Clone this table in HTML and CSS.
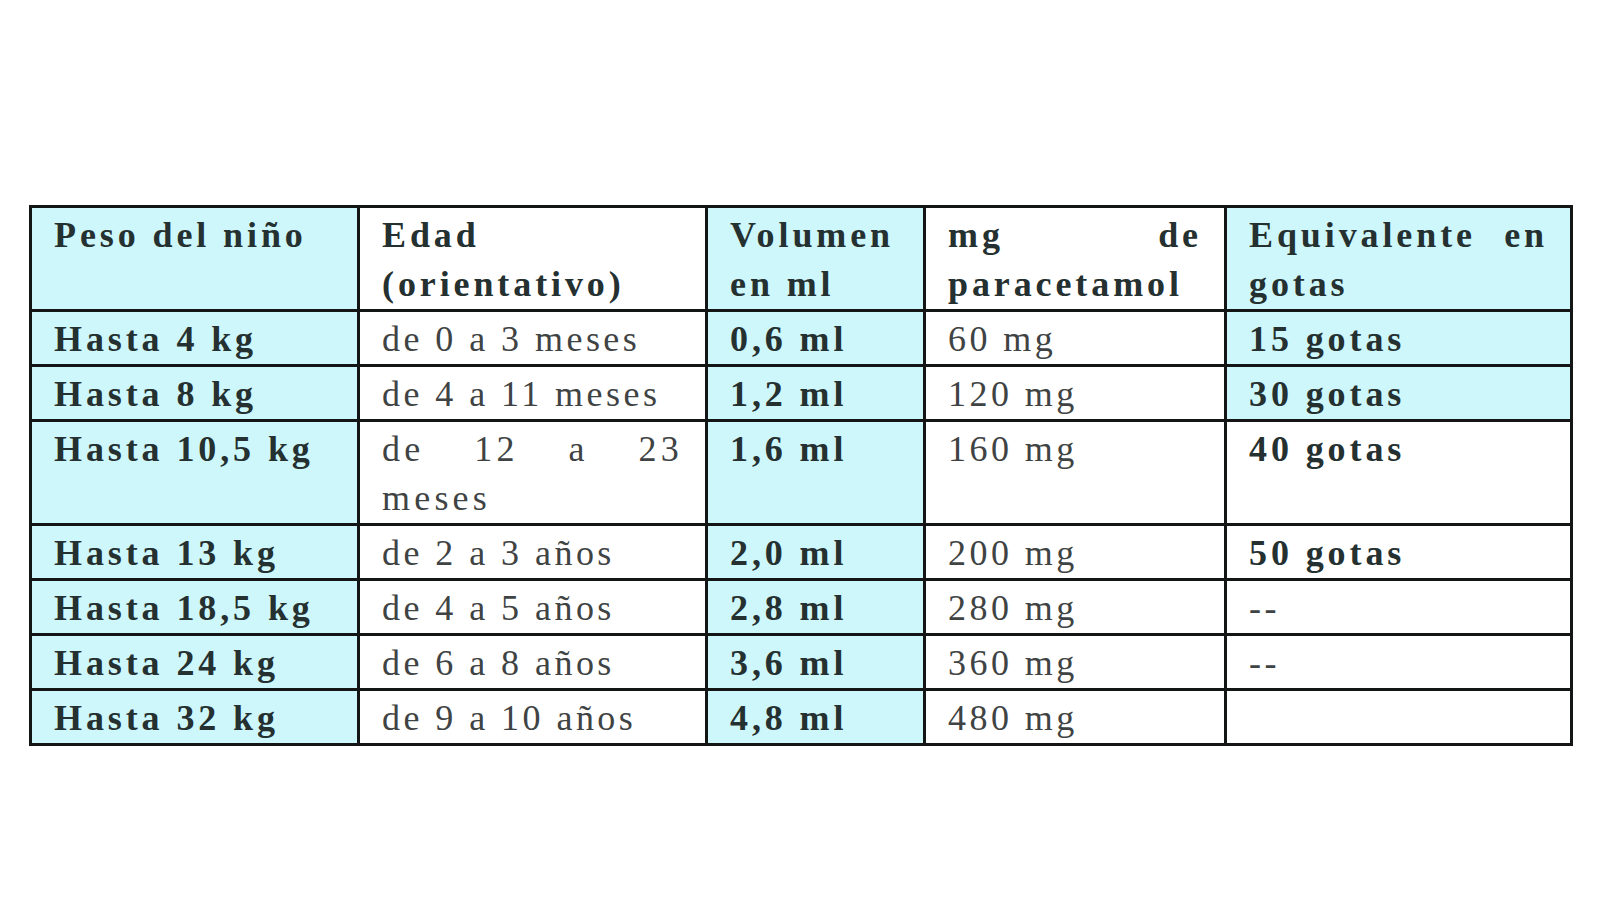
FILE: index.html
```html
<!DOCTYPE html>
<html lang="es">
<head>
<meta charset="utf-8">
<title>Dosis de paracetamol</title>
<link rel="stylesheet" href="styles.css">
</head>
<body>
<main class="page">
  <table class="dose-table">
    <colgroup>
      <col class="c1"><col class="c2"><col class="c3"><col class="c4"><col class="c5">
    </colgroup>
    <thead>
      <tr>
        <th class="cyan">Peso del niño</th>
        <th>Edad (orientativo)</th>
        <th class="cyan">Volumen en ml</th>
        <th>mg de paracetamol</th>
        <th class="cyan">Equivalente en gotas</th>
      </tr>
    </thead>
    <tbody>
      <tr>
        <td class="cyan b">Hasta 4 kg</td>
        <td>de 0 a 3 meses</td>
        <td class="cyan b">0,6 ml</td>
        <td>60 mg</td>
        <td class="cyan b">15 gotas</td>
      </tr>
      <tr>
        <td class="cyan b">Hasta 8 kg</td>
        <td>de 4 a 11 meses</td>
        <td class="cyan b">1,2 ml</td>
        <td>120 mg</td>
        <td class="cyan b">30 gotas</td>
      </tr>
      <tr>
        <td class="cyan b">Hasta 10,5 kg</td>
        <td class="narrow">de 12 a 23 meses</td>
        <td class="cyan b">1,6 ml</td>
        <td>160 mg</td>
        <td class="b">40 gotas</td>
      </tr>
      <tr>
        <td class="cyan b">Hasta 13 kg</td>
        <td>de 2 a 3 años</td>
        <td class="cyan b">2,0 ml</td>
        <td>200 mg</td>
        <td class="b">50 gotas</td>
      </tr>
      <tr>
        <td class="cyan b">Hasta 18,5 kg</td>
        <td>de 4 a 5 años</td>
        <td class="cyan b">2,8 ml</td>
        <td>280 mg</td>
        <td>--</td>
      </tr>
      <tr>
        <td class="cyan b">Hasta 24 kg</td>
        <td>de 6 a 8 años</td>
        <td class="cyan b">3,6 ml</td>
        <td>360 mg</td>
        <td>--</td>
      </tr>
      <tr>
        <td class="cyan b">Hasta 32 kg</td>
        <td>de 9 a 10 años</td>
        <td class="cyan b">4,8 ml</td>
        <td>480 mg</td>
        <td></td>
      </tr>
    </tbody>
  </table>
</main>
</body>
</html>
```
FILE: styles.css
```css
html, body {
  margin: 0;
  padding: 0;
  background: #ffffff;
}

.page {
  padding: 205px 0 0 29px;
}

.dose-table {
  border-collapse: collapse;
  table-layout: fixed;
  width: 1541px;
  font-family: "Liberation Serif", "Times New Roman", serif;
  font-size: 36px;
  line-height: 49px;
  color: #404343;
  border: 3px solid #141616;
}

.c1 { width: 328px; }
.c2 { width: 348px; }
.c3 { width: 218px; }
.c4 { width: 301px; }
.c5 { width: 346px; }

.dose-table th,
.dose-table td {
  border: 3px solid #141616;
  padding: 3px 22px 0 22px;
  vertical-align: top;
  text-align: justify;
  letter-spacing: 3.45px;
  font-weight: normal;
  background: #ffffff;
}

.dose-table th,
.dose-table td.b {
  font-weight: bold;
  color: #253030;
  letter-spacing: 3.9px;
}

.dose-table .cyan {
  background: #cef7fc;
}

.dose-table td.narrow {
  letter-spacing: 4.2px;
}
```
